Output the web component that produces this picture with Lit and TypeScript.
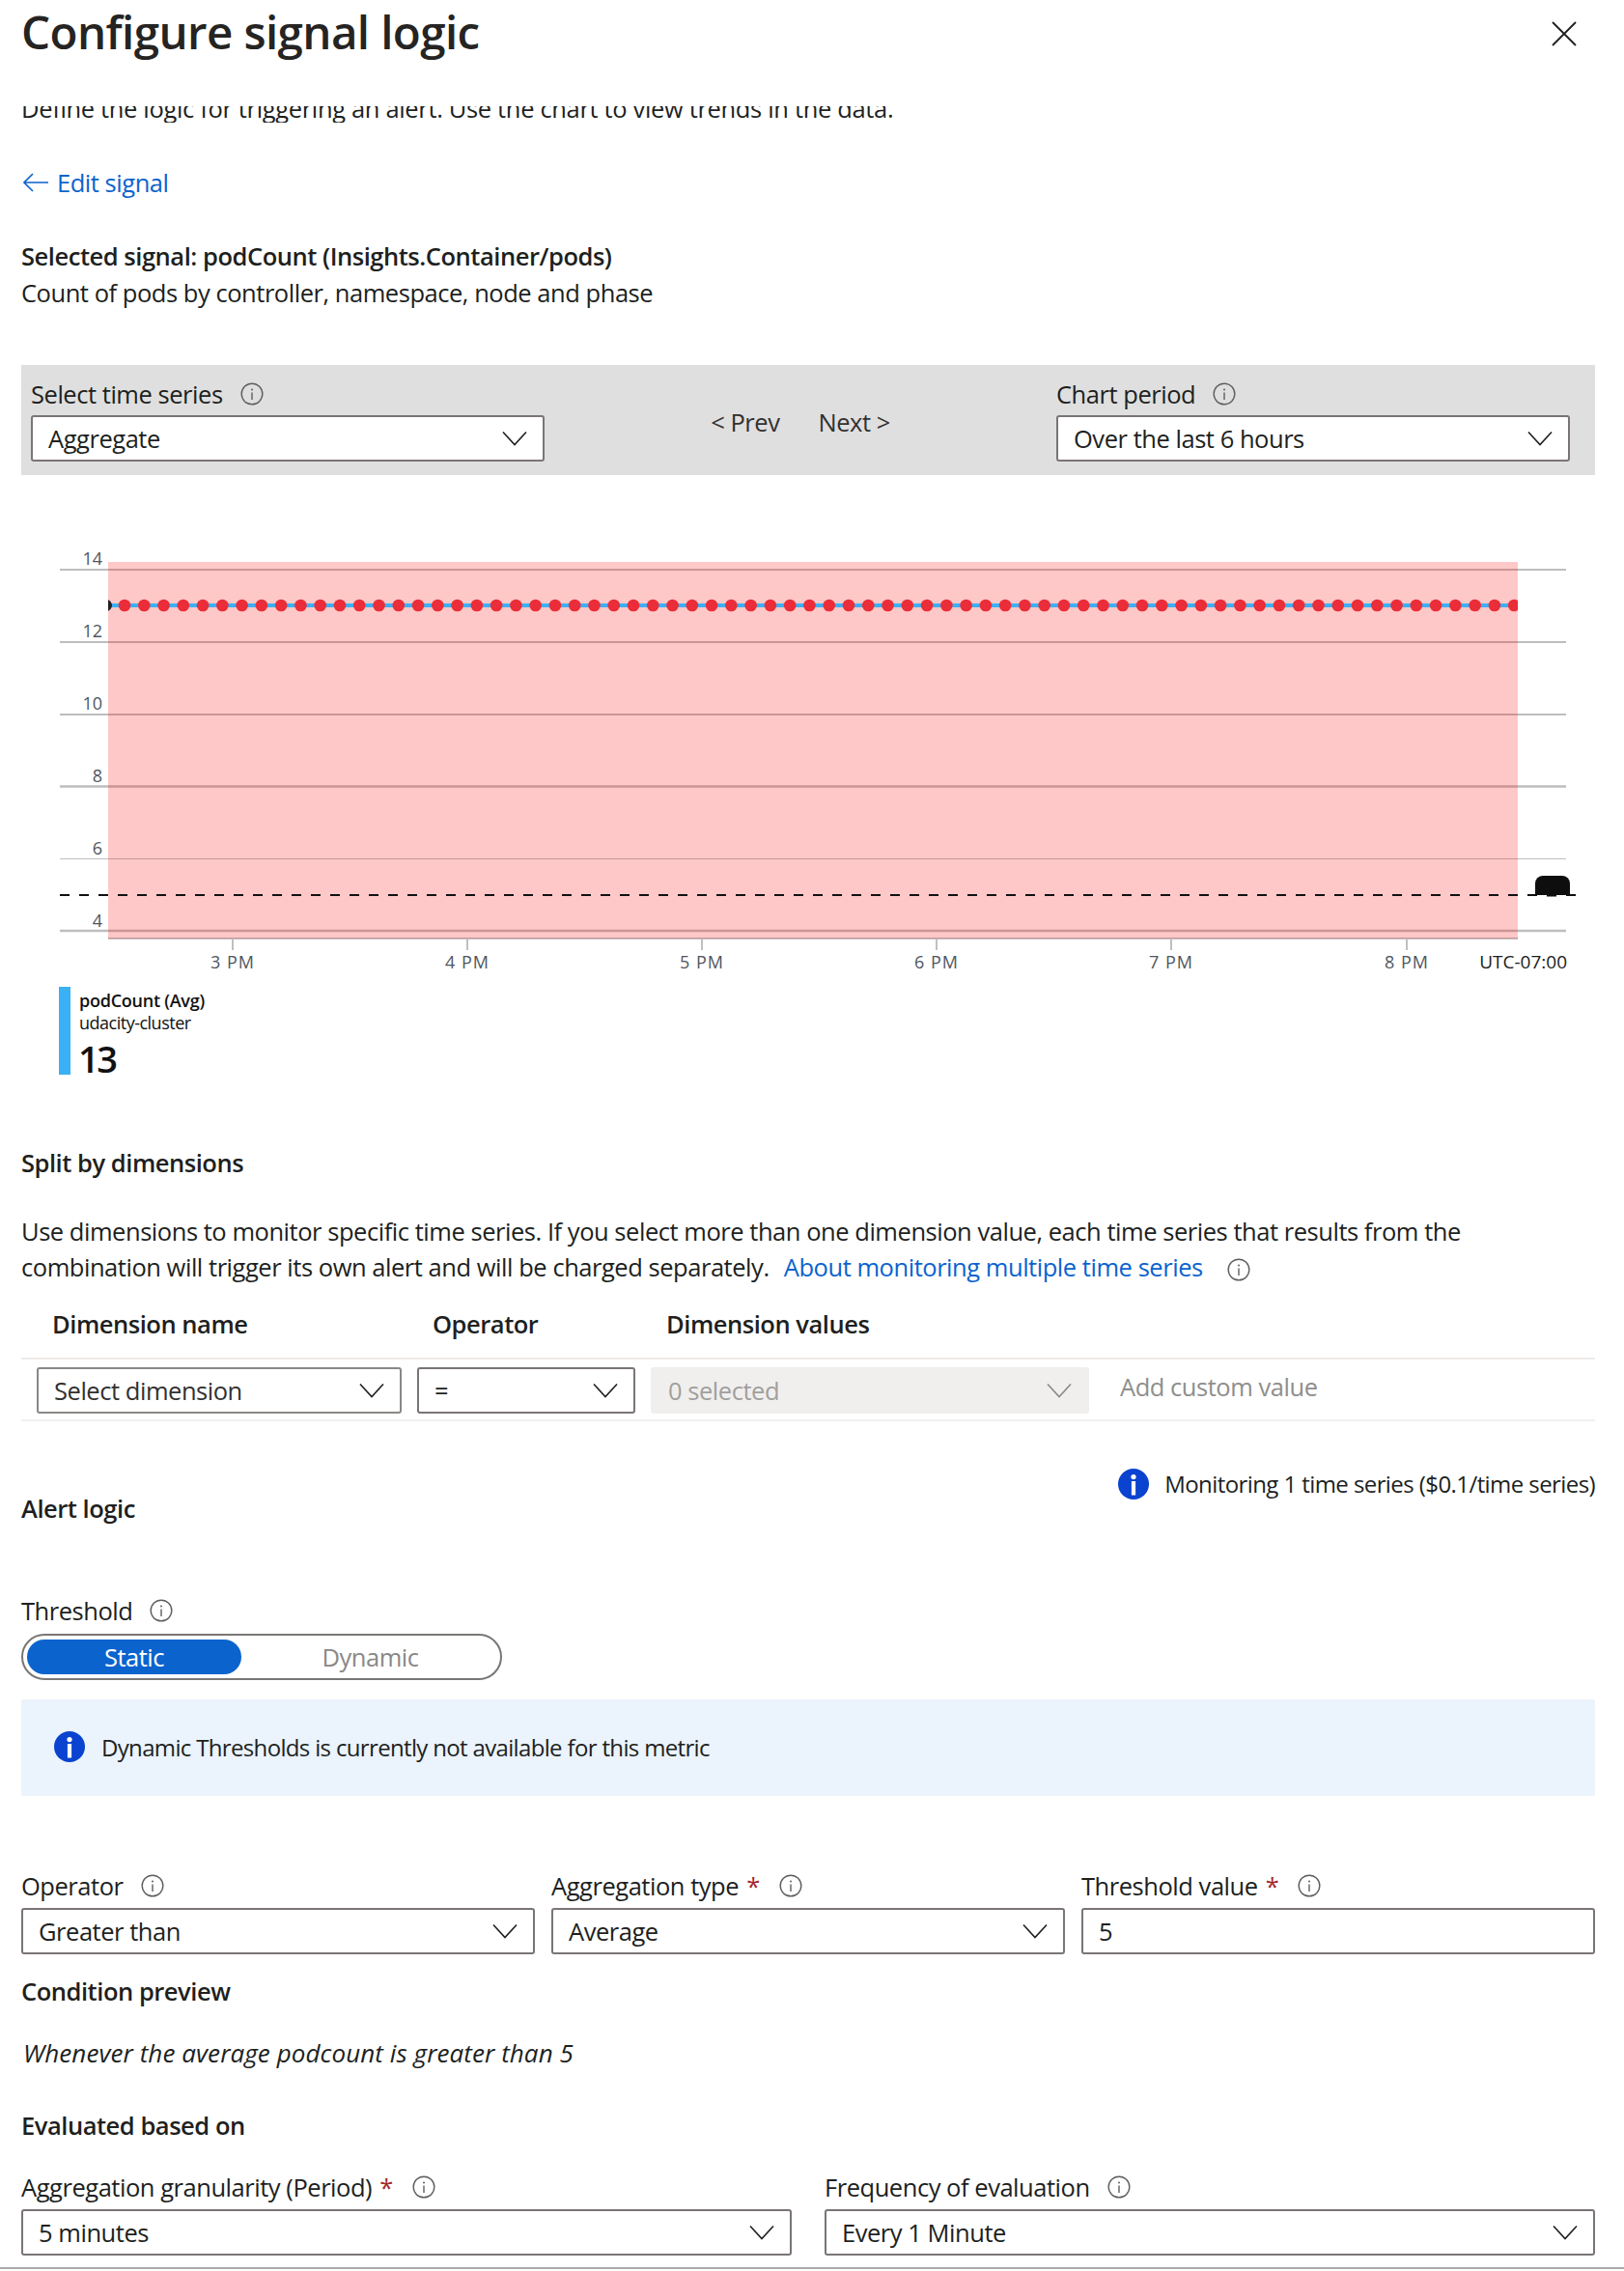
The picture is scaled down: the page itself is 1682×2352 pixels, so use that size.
import { LitElement, css, html, svg } from 'lit'
import { customElement } from 'lit/decorators.js'

const info = () => html`<svg class="info" width="24" height="24" viewBox="0 0 24 24">
  <circle cx="12" cy="12" r="10.8" fill="none" stroke="#605e5c" stroke-width="1.4"></circle>
  <path d="M12 10.5V18" stroke="#605e5c" stroke-width="1.4"></path>
  <circle cx="12" cy="7.4" r="1" fill="#605e5c"></circle>
</svg>`

const infoSolid = () => html`<svg class="solid" width="32" height="32" viewBox="0 0 32 32">
  <circle cx="16" cy="16" r="16" fill="#0a43cf"></circle>
  <circle cx="16" cy="8.6" r="2.6" fill="#fff"></circle>
  <rect x="13.9" y="13" width="4.2" height="14.5" fill="#fff"></rect>
</svg>`

const chevron = (color = '#201f1e') => html`<svg class="chev" width="26" height="16" viewBox="0 0 26 16">
  <path d="M1 1.5 13 14.5 25 1.5" fill="none" stroke=${color} stroke-width="1.6"></path>
</svg>`

const select = (text: string, cls = '') => html`<div class="select ${cls}"><span>${text}</span>${chevron()}</div>`

const label = (text: string, required = false) => html`<div class="label">
  <span>${text}</span>${required ? html`<span class="star">*</span>` : ''}${info()}
</div>`

const gridLines = [
  { y: 590, w: 2 },
  { y: 665, w: 2 },
  { y: 740, w: 2 },
  { y: 814.5, w: 2.5 },
  { y: 889.5, w: 1.2 },
  { y: 964, w: 2.5 },
]
const yLabels = [
  { t: '14', y: 585 },
  { t: '12', y: 660 },
  { t: '10', y: 735 },
  { t: '8', y: 810 },
  { t: '6', y: 885 },
  { t: '4', y: 960 },
]
const xLabels = [
  { t: '3 PM', x: 241 },
  { t: '4 PM', x: 484 },
  { t: '5 PM', x: 727 },
  { t: '6 PM', x: 970 },
  { t: '7 PM', x: 1213 },
  { t: '8 PM', x: 1457 },
]
const dots = Array.from({ length: 72 }, (_, i) => 129 + i * 20.27)

@customElement('app-root')
export class AppRoot extends LitElement {
  static styles = css`
    :host {
      display: block;
      width: 1682px;
      height: 2352px;
      overflow: hidden;
      background: #fff;
      color: #201f1e;
      font-family: "Open Sans", "Liberation Sans", sans-serif;
      font-size: 25.5px;
      letter-spacing: -0.46px;
    }
    .content { padding: 0 30px 0 22px; }
    .head {
      height: 110px;
      display: flex;
      justify-content: space-between;
      align-items: flex-start;
      padding-right: 19px;
    }
    h1 {
      margin: 0;
      font-size: 47.5px;
      font-weight: 600;
      line-height: 66px;
      letter-spacing: -0.6px;
      color: #252423;
    }
    .close { margin-top: 22px; display: block; }
    .clip { height: 17px; overflow: hidden; }
    .clip div { margin-top: -16px; line-height: 36px; white-space: nowrap; letter-spacing: -0.34px; }
    .back {
      margin-top: 44px;
      height: 36px;
      line-height: 36px;
      display: flex;
      align-items: center;
      gap: 9px;
      padding-left: 2px;
      color: #0b63ce;
    }
    .strong { font-weight: 600; }
    .line { line-height: 38px; }
    .selected { margin-top: 39px; }
    .toolbar {
      margin-top: 56px;
      height: 114px;
      box-sizing: border-box;
      background: #dfdfdf;
      padding: 15px 26px 14px 10px;
      display: grid;
      grid-template-columns: 532px 1fr 532px;
    }
    .pager {
      display: flex;
      justify-content: center;
      gap: 40px;
      line-height: 30px;
      margin-top: 29px;
      color: #323130;
    }
    .label {
      display: flex;
      align-items: center;
      height: 30px;
      line-height: 30px;
      margin-bottom: 7px;
      white-space: nowrap;
    }
    .label .info { margin-left: 18px; }
    .star { color: #a4262c; margin-left: 8px; }
    .star + .info { margin-left: 20px; }
    .select, .input {
      height: 48px;
      box-sizing: border-box;
      background: #fff;
      border: 2px solid #7a7574;
      border-radius: 3px;
      padding: 0 16px;
      display: flex;
      align-items: center;
      justify-content: space-between;
      white-space: nowrap;
    }
    .select.soft { border-color: #8a8886; color: #323130; }
    .select.off {
      background: #f0efee;
      border-color: #f0efee;
      color: #a19f9d;
    }
    .chev { flex: none; }
    .chart { display: block; }
    .chart text {
      font-family: "Open Sans", "Liberation Sans", sans-serif;
      font-size: 18px;
      letter-spacing: 0;
      fill: #505660;
    }
    .chart text.tick { letter-spacing: 1px; }
    .chart text.utc { fill: #202020; font-size: 19px; }
    .legend {
      margin: 12px 0 0 61px;
      height: 91px;
      display: flex;
      gap: 9px;
    }
    .legend-bar { width: 12px; background: #3bb0f5; }
    .legend-text { color: #111; padding-top: 3px; letter-spacing: -0.5px; }
    .legend-text div { font-size: 18px; line-height: 23px; }
    .legend-text .name { font-weight: 600; letter-spacing: -0.25px; }
    .legend-text .value {
      font-size: 38px;
      font-weight: 600;
      line-height: 40px;
      margin: 5px 0 0 -1px;
      letter-spacing: -2.5px;
    }
    .split { margin-top: 72px; }
    .para { margin-top: 34px; line-height: 37px; }
    .para a { color: #0b63ce; text-decoration: none; margin-left: 9px; }
    .para svg { vertical-align: -5px; margin-left: 25px; }
    .dim-grid {
      display: grid;
      grid-template-columns: 378px 226px 454px 1fr;
      column-gap: 16px;
      padding-left: 16px;
    }
    .dim-grid > :last-child { margin-left: 16px; }
    .dim-head { margin-top: 21px; line-height: 38px; margin-bottom: 16px; }
    .dim-head span { padding-left: 16px; }
    .dim-row {
      border-top: 2px solid #edebe9;
      border-bottom: 2px solid #f0efee;
      padding: 8px 0 6px 16px;
    }
    .custom { color: #8f8e8c; line-height: 40px; }
    .alert-row {
      margin-top: 48px;
      display: flex;
      justify-content: space-between;
      align-items: flex-start;
    }
    .alert-title { margin-top: 23px; }
    .monitor { display: flex; align-items: center; gap: 16px; font-size: 24px; letter-spacing: -0.58px; }
    .threshold { margin-top: 72px; margin-bottom: 9px; }
    .toggle {
      width: 498px;
      height: 48px;
      box-sizing: border-box;
      border: 2px solid #797775;
      border-radius: 24px;
      padding: 4px;
      display: grid;
      grid-template-columns: 222px 1fr;
      text-align: center;
      line-height: 36px;
    }
    .toggle .on { background: #0b63ce; color: #fff; border-radius: 18px; }
    .toggle .off { color: #8a8886; padding-left: 3px; }
    .banner {
      margin-top: 20px;
      height: 100px;
      box-sizing: border-box;
      padding: 0 0 2px 34px;
      background: #ebf3fc;
      border-radius: 2px;
      display: flex;
      align-items: center;
      gap: 17px;
      font-size: 24px;
      letter-spacing: -0.66px;
    }
    .three {
      margin-top: 78px;
      display: grid;
      grid-template-columns: repeat(3, 532px);
      column-gap: 17px;
    }
    .three .label, .two .label { margin-bottom: 8px; }
    .preview { margin-top: 19px; }
    .italic {
      margin-top: 26px;
      font-style: italic;
      font-size: 26px;
      letter-spacing: 0.08px;
      padding-left: 2px;
    }
    .evaluated { margin-top: 37px; }
    .two {
      margin-top: 30px;
      display: grid;
      grid-template-columns: repeat(2, 798px);
      column-gap: 34px;
    }
    .foot { margin-top: 12px; height: 2px; background: #aaa; }
  `

  renderChart() {
    return html`<svg class="chart" width="1682" height="518" viewBox="0 492 1682 518">
      <defs>
        <clipPath id="plot"><rect x="112" y="582" width="1460" height="390"></rect></clipPath>
      </defs>
      ${gridLines.map(g => svg`<line x1="62" x2="1622" y1=${g.y} y2=${g.y} stroke="#bebebe" stroke-width=${g.w}></line>`)}
      ${yLabels.map(l => svg`<text x="106" y=${l.y} text-anchor="end">${l.t}</text>`)}
      <line x1="112" x2="1572" y1="972" y2="972" stroke="#c0c0c0" stroke-width="2"></line>
      ${xLabels.map(l => svg`
        <line x1=${l.x} x2=${l.x} y1="972" y2="984" stroke="#c0c0c0" stroke-width="2"></line>
        <text class="tick" x=${l.x} y="1003" text-anchor="middle">${l.t}</text>`)}
      <text class="utc" x="1623" y="1003" text-anchor="end">UTC-07:00</text>
      <rect x="112" y="582" width="1460" height="390" fill="#ff0000" fill-opacity=".215"></rect>
      <g clip-path="url(#plot)">
        <line x1="112" x2="1572" y1="627" y2="627" stroke="#3bb0f5" stroke-width="4"></line>
        <circle cx="110" cy="627" r="6" fill="#222"></circle>
        ${dots.map(x => svg`<circle cx=${x} cy="627" r="6.3" fill="#ea2d38"></circle>`)}
      </g>
      <line x1="62" x2="1632" y1="927" y2="927" stroke="#111" stroke-width="2" stroke-dasharray="10 10"></line>
      <path d="M1590 927V915a8 8 0 0 1 8-8h20a8 8 0 0 1 8 8v12z" fill="#0e0e0e"></path>
      <rect x="1602" y="926" width="10" height="2.5" fill="#0e0e0e"></rect>
    </svg>`
  }

  render() {
    return html`
      <div class="content">
        <div class="head">
          <h1>Configure signal logic</h1>
          <svg class="close" width="26" height="26" viewBox="0 0 26 26">
            <path d="M1 1 25 25M25 1 1 25" stroke="#201f1e" stroke-width="1.8" fill="none"></path>
          </svg>
        </div>
        <div class="clip"><div>Define the logic for triggering an alert. Use the chart to view trends in the data.</div></div>
        <div class="back">
          <svg width="26" height="20" viewBox="0 0 26 20">
            <path d="M10 1 1 10l9 9M1 10h25" fill="none" stroke="#0b63ce" stroke-width="1.6"></path>
          </svg>
          <span>Edit signal</span>
        </div>
        <div class="line strong selected">Selected signal: podCount (Insights.Container/pods)</div>
        <div class="line">Count of pods by controller, namespace, node and phase</div>
        <div class="toolbar">
          <div>${label('Select time series')}${select('Aggregate')}</div>
          <div class="pager"><span>&lt; Prev</span><span>Next &gt;</span></div>
          <div>${label('Chart period')}${select('Over the last 6 hours')}</div>
        </div>
      </div>
      ${this.renderChart()}
      <div class="legend">
        <div class="legend-bar"></div>
        <div class="legend-text">
          <div class="name">podCount (Avg)</div>
          <div>udacity-cluster</div>
          <div class="value">13</div>
        </div>
      </div>
      <div class="content">
        <div class="line strong split">Split by dimensions</div>
        <div class="para">Use dimensions to monitor specific time series. If you select more than one dimension value, each time series that results from the<br>combination will trigger its own alert and will be charged separately. <a>About monitoring multiple time series</a>${info()}</div>
        <div class="dim-grid dim-head strong">
          <span>Dimension name</span><span>Operator</span><span>Dimension values</span><span></span>
        </div>
        <div class="dim-grid dim-row">
          ${select('Select dimension', 'soft')}
          ${select('=')}
          <div class="select off"><span>0 selected</span>${chevron('#8a8886')}</div>
          <div class="custom">Add custom value</div>
        </div>
        <div class="alert-row">
          <div class="line strong alert-title">Alert logic</div>
          <div class="monitor">${infoSolid()}<span>Monitoring 1 time series ($0.1/time series)</span></div>
        </div>
        <div class="threshold">${label('Threshold')}</div>
        <div class="toggle"><div class="on">Static</div><div class="off">Dynamic</div></div>
        <div class="banner">${infoSolid()}<span>Dynamic Thresholds is currently not available for this metric</span></div>
        <div class="three">
          <div>${label('Operator')}${select('Greater than')}</div>
          <div>${label('Aggregation type', true)}${select('Average')}</div>
          <div>${label('Threshold value', true)}<div class="input"><span>5</span></div></div>
        </div>
        <div class="line strong preview">Condition preview</div>
        <div class="line italic">Whenever the average podcount is greater than 5</div>
        <div class="line strong evaluated">Evaluated based on</div>
        <div class="two">
          <div>${label('Aggregation granularity (Period)', true)}${select('5 minutes')}</div>
          <div>${label('Frequency of evaluation')}${select('Every 1 Minute')}</div>
        </div>
      </div>
      <div class="foot"></div>
    `
  }
}
